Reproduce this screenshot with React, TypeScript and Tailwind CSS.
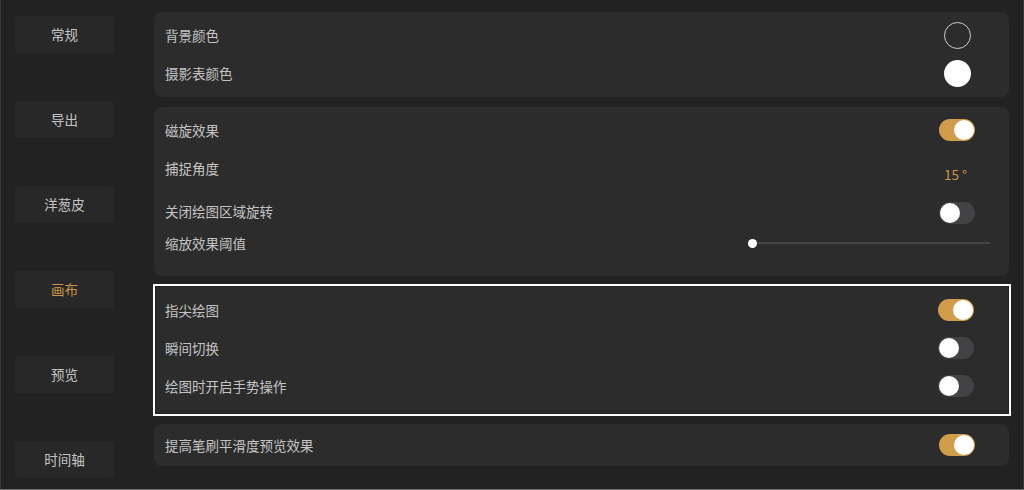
import React from "react";

const font = { fontFamily: '"Noto Sans CJK SC", "Noto Sans", sans-serif' };

function Toggle({ on }: { on: boolean }) {
  return (
    <div
      className={`w-[36px] h-[22px] rounded-full flex items-center px-[1px] ${
        on ? "bg-[#d29d4b] justify-end" : "bg-[#434346] justify-start"
      }`}
    >
      <div className="w-[20px] h-[20px] rounded-full bg-white" />
    </div>
  );
}

function Row({ label, children, h = "h-[38px]" }: { label: string; children?: React.ReactNode; h?: string }) {
  return (
    <div className={`flex items-center justify-between ${h}`}>
      <span className="text-[13.5px] text-[#c4c4c4]">{label}</span>
      {children}
    </div>
  );
}

const navItems = ["常规", "导出", "洋葱皮", "画布", "预览", "时间轴"];

export default function App() {
  return (
    <div
      className="w-[1024px] h-[490px] bg-[#222222] flex border-l border-r border-b border-l-[#3a3a3a] border-r-[#3a3a3a] border-b-[#6a6a6a] overflow-hidden"
      style={font}
    >
      <div className="w-[153px] shrink-0 flex flex-col pl-[14px] pt-[16px] gap-[48px]">
        {navItems.map((n) => (
          <div
            key={n}
            className={`w-[99px] h-[37px] rounded-[4px] bg-[#282828] flex items-center justify-center text-[13.5px] ${
              n === "画布" ? "text-[#c8954a]" : "text-[#c4c4c4]"
            }`}
          >
            {n}
          </div>
        ))}
      </div>
      <div className="flex-1 flex flex-col pt-[12px] pr-[14px]">
        {/* Panel 1 */}
        <div className="h-[85px] rounded-[8px] bg-[#2c2c2c] pl-[11px] pr-[38px] pt-[4px] flex flex-col">
          <Row label="背景颜色">
            <div className="w-[27px] h-[27px] rounded-full border border-[#cfcfcf]" />
          </Row>
          <Row label="摄影表颜色">
            <div className="w-[27px] h-[27px] rounded-full bg-white" />
          </Row>
        </div>
        {/* Panel 2 */}
        <div className="mt-[10px] h-[169px] rounded-[8px] bg-[#2c2c2c] pl-[11px] pr-[34px] pt-[4px] flex flex-col">
          <Row label="磁旋效果">
            <Toggle on />
          </Row>
          <Row label="捕捉角度">
            <span className="text-[13.5px] text-[#c8954a] mt-[12px] mr-[8px]">15 °</span>
          </Row>
          <Row label="关闭绘图区域旋转" h="h-[48px]">
            <div className="mt-[3px]">
              <Toggle on={false} />
            </div>
          </Row>
          <div className="flex items-center h-[20px] -mt-[2px]">
            <span className="text-[13.5px] text-[#c4c4c4]">缩放效果阈值</span>
            <div className="ml-auto -mr-[15px] w-[242px] h-[10px] relative flex items-center">
              <div className="w-full h-[2px] bg-[#454545]" />
              <div className="absolute left-0 w-[9px] h-[9px] rounded-full bg-white" />
            </div>
          </div>
        </div>
        {/* Panel 3 highlighted */}
        <div className="mt-[8px] -ml-[1px] -mr-[2px] h-[132px] border-2 border-white p-[1px]">
          <div className="h-full bg-[#2c2c2c] pl-[9px] pr-[34px] pt-[4px] flex flex-col">
            <Row label="指尖绘图">
              <Toggle on />
            </Row>
            <Row label="瞬间切换">
              <Toggle on={false} />
            </Row>
            <Row label="绘图时开启手势操作">
              <Toggle on={false} />
            </Row>
          </div>
        </div>
        {/* Panel 4 */}
        <div className="mt-[8px] h-[42px] rounded-[8px] bg-[#2c2c2c] pl-[11px] pr-[34px] flex items-center">
          <div className="flex-1">
            <Row label="提高笔刷平滑度预览效果" h="h-[42px]">
              <Toggle on />
            </Row>
          </div>
        </div>
      </div>
    </div>
  );
}
